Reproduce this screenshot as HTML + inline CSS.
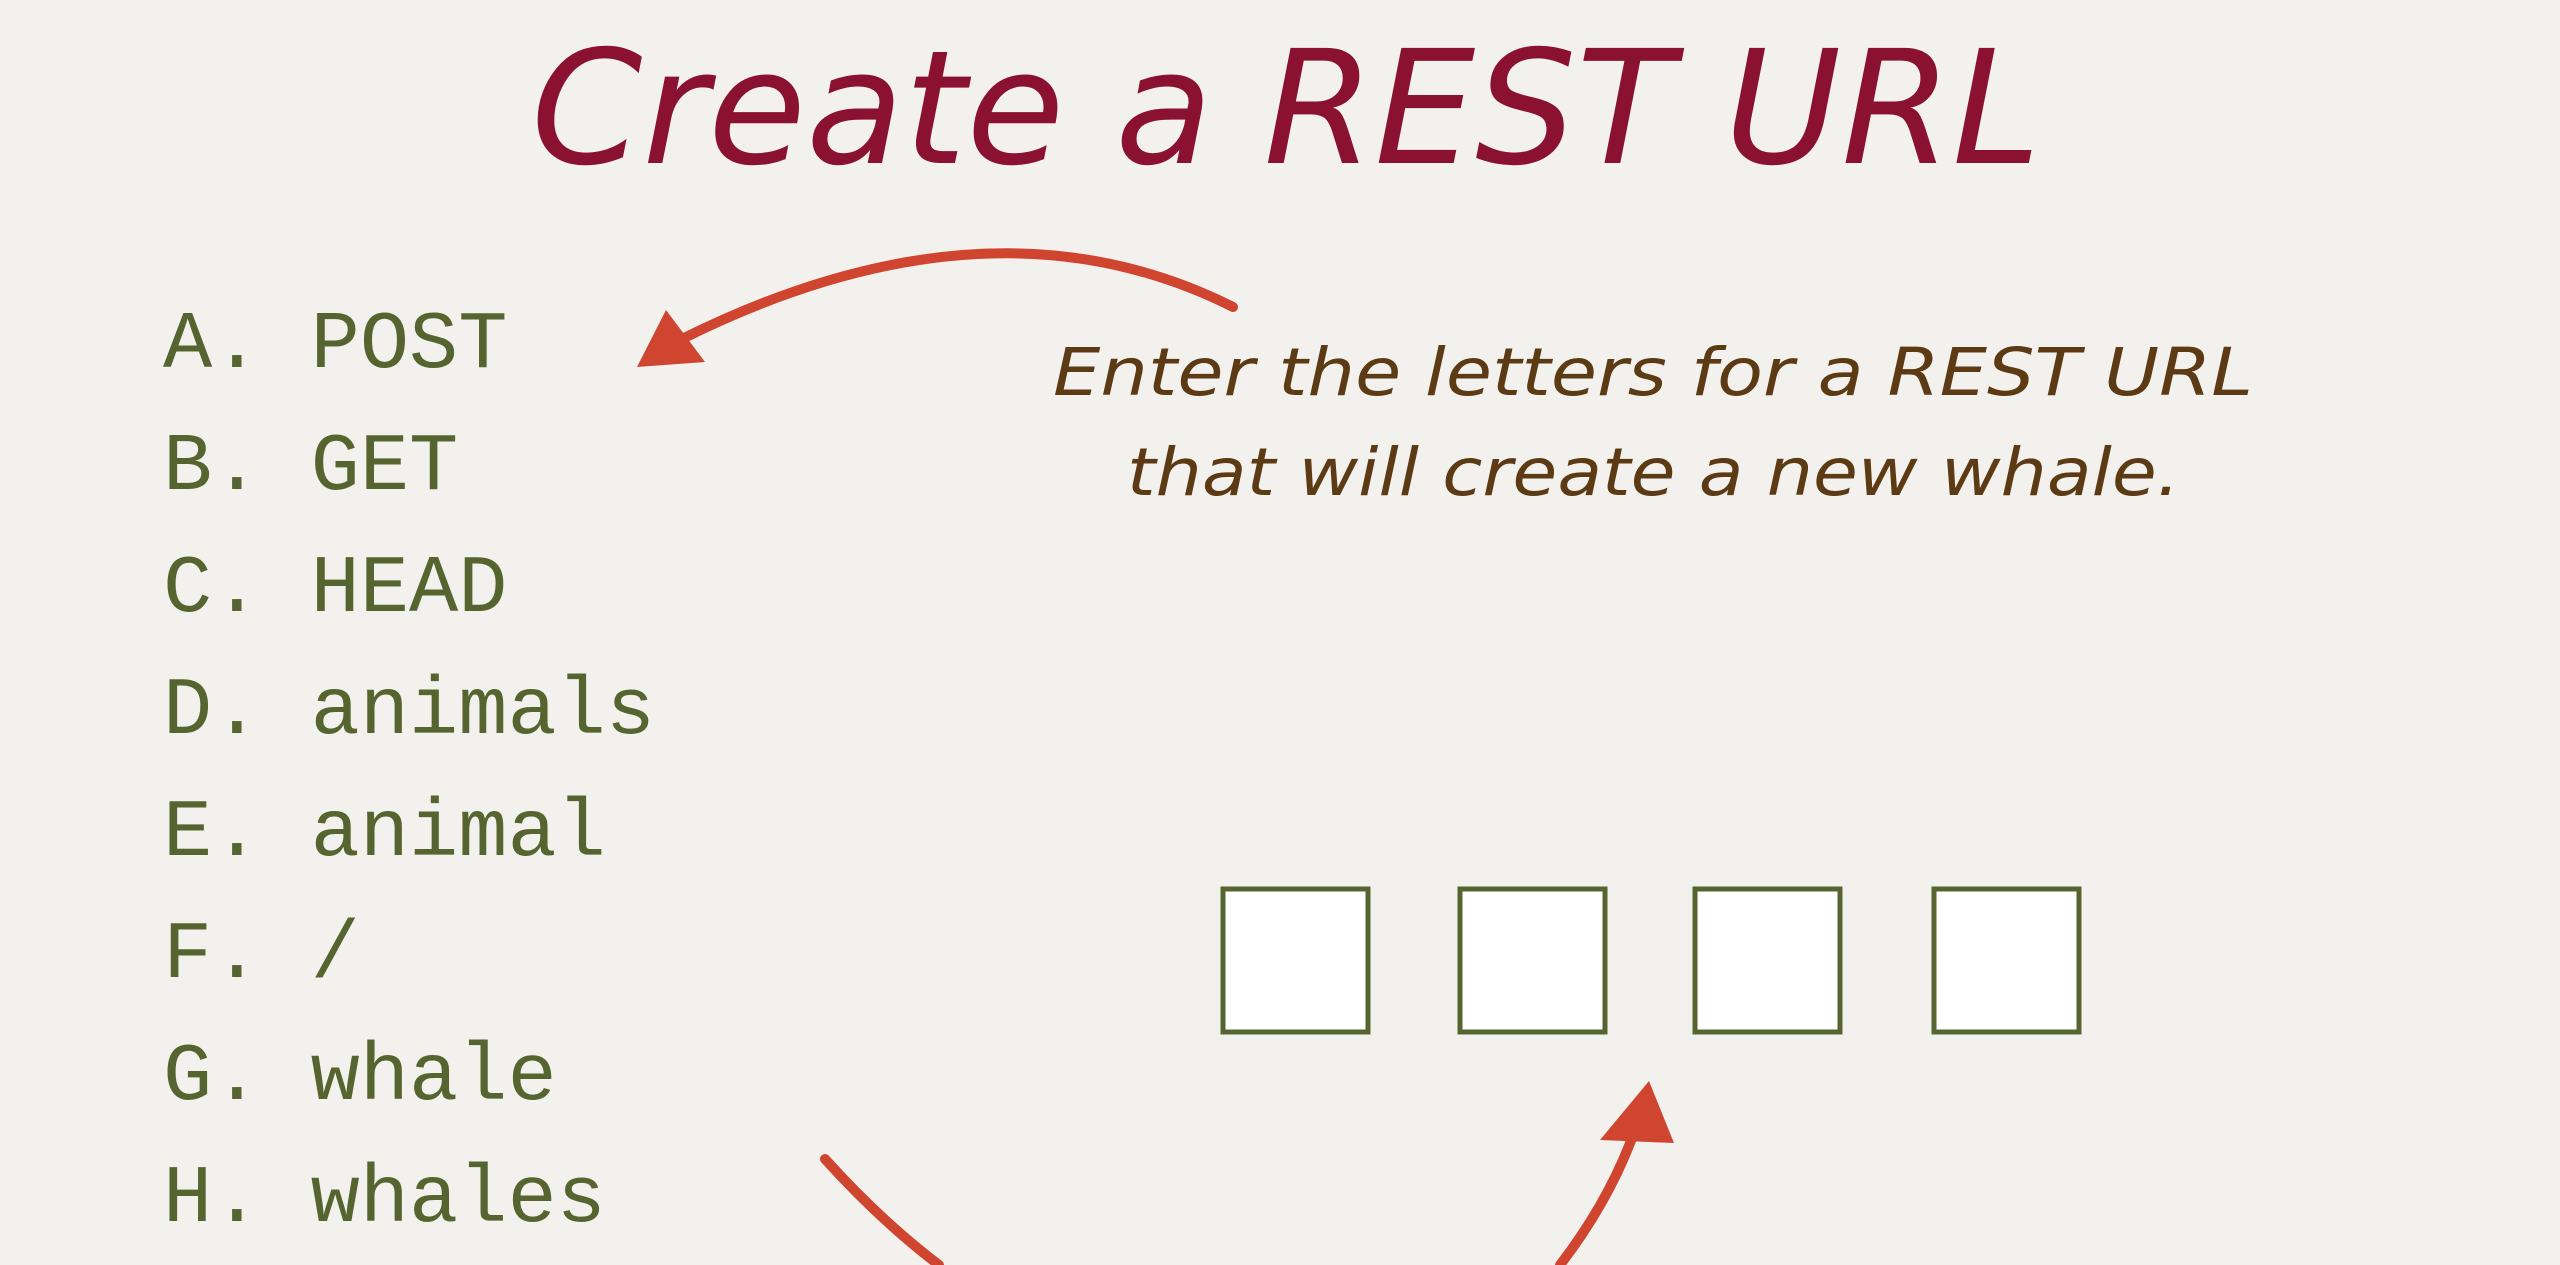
<!DOCTYPE html>
<html><head><meta charset="utf-8"><style>
html,body{margin:0;padding:0;width:2560px;height:1265px;overflow:hidden;background:#f3f1ee}
svg{display:block}
</style></head><body>
<svg width="2560" height="1265" viewBox="0 0 2560 1265" xmlns="http://www.w3.org/2000/svg">
<rect width="2560" height="1265" fill="#f3f1ee"/>
<text x="531" y="163" textLength="1510" lengthAdjust="spacingAndGlyphs" font-family="'DejaVu Sans', sans-serif" font-style="oblique" font-size="158" fill="#8a1230">Create a REST URL</text>
<g font-family="'Liberation Mono', monospace" font-size="82" fill="#56652f" letter-spacing="0">
<text x="163" y="367">A. POST</text>
<text x="163" y="489">B. GET</text>
<text x="163" y="611">C. HEAD</text>
<text x="163" y="733">D. animals</text>
<text x="163" y="855">E. animal</text>
<text x="163" y="977">F. /</text>
<text x="163" y="1099">G. whale</text>
<text x="163" y="1221">H. whales</text>
</g>
<g font-family="'DejaVu Sans', sans-serif" font-style="oblique" font-size="66" fill="#5b3a14">
<text x="1053" y="395" textLength="1200" lengthAdjust="spacingAndGlyphs">Enter the letters for a REST URL</text>
<text x="1127" y="495" textLength="1053" lengthAdjust="spacingAndGlyphs">that will create a new whale.</text>
</g>
<g fill="#fff" stroke="#56652f" stroke-width="5">
<rect x="1223" y="889" width="145" height="143"/>
<rect x="1460" y="889" width="145" height="143"/>
<rect x="1695" y="889" width="145" height="143"/>
<rect x="1934" y="889" width="145" height="143"/>
</g>
<g fill="none" stroke="#d0452f" stroke-width="10" stroke-linecap="round">
<path d="M1233 307 Q990 185 680 340"/>
<path d="M825 1159 Q880 1220 939 1265"/>
<path d="M1560 1265 Q1610 1200 1635 1130"/>
</g>
<g fill="#d0452f">
<polygon points="637,367 666,310 705,362"/>
<polygon points="1649,1081 1600,1140 1674,1143"/>
</g>
</svg>
</body></html>
